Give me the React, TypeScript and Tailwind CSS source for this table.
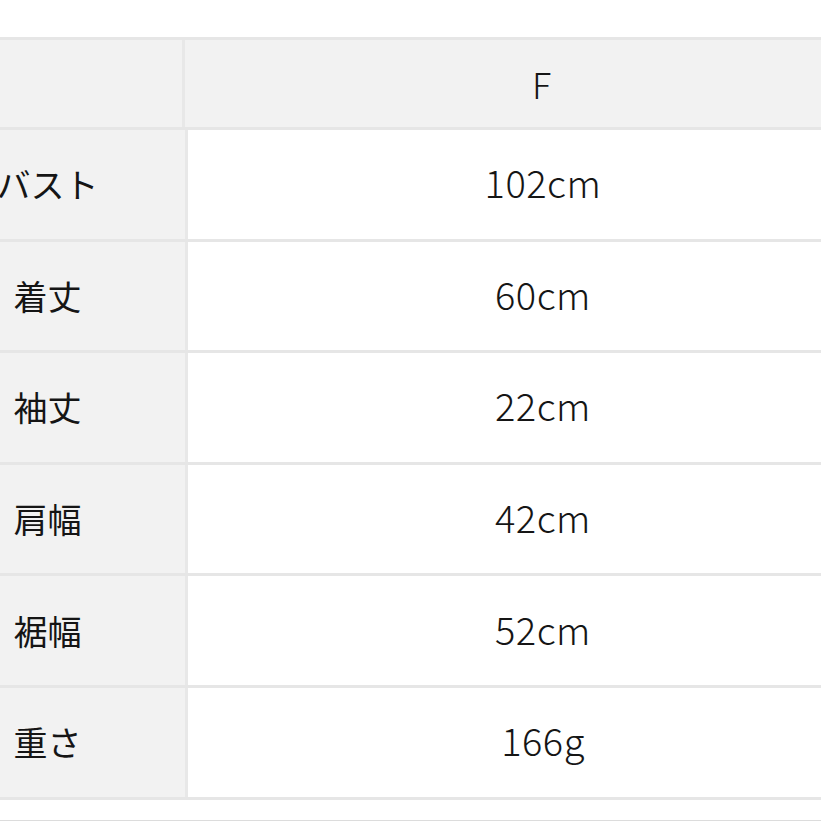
const rows = [
  { label: "バスト", value: "102cm" },
  { label: "着丈", value: "60cm" },
  { label: "袖丈", value: "22cm" },
  { label: "肩幅", value: "42cm" },
  { label: "裾幅", value: "52cm" },
  { label: "重さ", value: "166g" },
];

const font = { fontFamily: '"Noto Sans CJK JP", "Noto Sans", sans-serif' };

export default function App() {
  return (
    <main className="h-[821px] w-[821px] overflow-hidden bg-white text-[#151515]" style={font}>
      <div className="h-[37px]" />
      <div className="border-t-[3px] border-b-[3px] border-[#e6e6e6]">
        {/* header */}
        <div className="flex h-[87px] bg-[#f2f2f2]">
          <div className="w-[185px] shrink-0 border-r-[3px] border-[#e8e8e8]" />
          <div className="flex flex-1 items-center justify-center pl-[77px] pb-[2px] text-[36px] font-light leading-none">F</div>
        </div>
        {rows.map((r) => (
          <div key={r.label} className="flex h-[111.6px] border-t-[3px] border-[#e6e6e6]">
            <div className="flex w-[188px] shrink-0 items-center justify-center border-r-[3px] border-[#e8e8e8] bg-[#f2f2f2] pr-[90px]">
              <span className="whitespace-nowrap text-[34px] leading-none">{r.label}</span>
            </div>
            <div className="flex flex-1 items-center justify-center bg-white pl-[77px] pb-[4px] text-[38px] font-light leading-none tracking-[0.5px]">
              {r.value}
            </div>
          </div>
        ))}
      </div>
      <div className="h-[20px]" />
      <div className="h-[2px] bg-[#dcdcdc]" />
    </main>
  );
}
